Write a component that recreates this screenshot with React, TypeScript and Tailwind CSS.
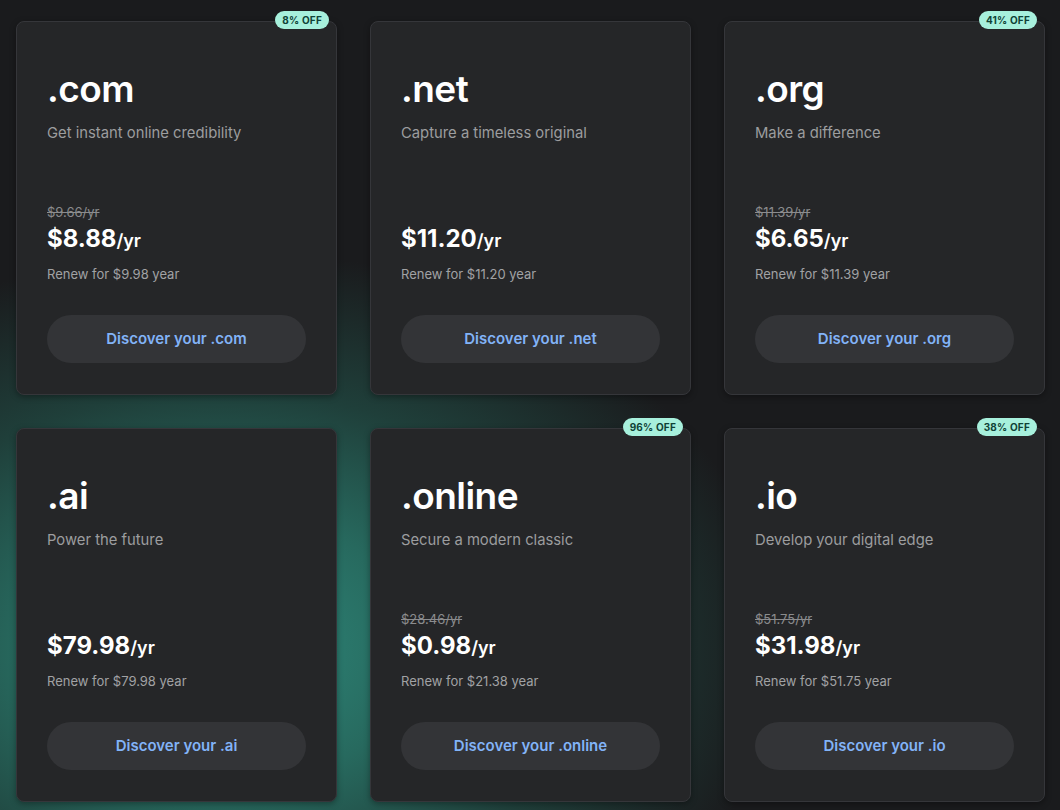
type Domain = {
  tld: string;
  tagline: string;
  was?: string;
  price: string;
  renew: string;
  off?: string;
};

const domains: Domain[] = [
  { tld: '.com', tagline: 'Get instant online credibility', was: '$9.66/yr', price: '$8.88', renew: 'Renew for $9.98 year', off: '8% OFF' },
  { tld: '.net', tagline: 'Capture a timeless original', price: '$11.20', renew: 'Renew for $11.20 year' },
  { tld: '.org', tagline: 'Make a difference', was: '$11.39/yr', price: '$6.65', renew: 'Renew for $11.39 year', off: '41% OFF' },
  { tld: '.ai', tagline: 'Power the future', price: '$79.98', renew: 'Renew for $79.98 year' },
  { tld: '.online', tagline: 'Secure a modern classic', was: '$28.46/yr', price: '$0.98', renew: 'Renew for $21.38 year', off: '96% OFF' },
  { tld: '.io', tagline: 'Develop your digital edge', was: '$51.75/yr', price: '$31.98', renew: 'Renew for $51.75 year', off: '38% OFF' },
];

function DomainCard({ d }: { d: Domain }) {
  return (
    <div className="relative flex h-[374px] flex-col rounded-lg border border-[#35363a] bg-[#252628] px-[30px] pb-[31px] pt-[48px] shadow-[0_2px_6px_rgba(0,0,0,0.35)]">
      {d.off ? (
        <span className="absolute -top-[11px] right-[7px] rounded-full bg-[#a7f0dc] px-[7px] text-[10px] font-bold leading-[18px] tracking-[0.02em] text-[#0f4236]">
          {d.off}
        </span>
      ) : null}
      <div className="text-[37px] font-semibold leading-[38px] tracking-[-0.015em] text-white">{d.tld}</div>
      <div className="mt-[15px] text-[14.8px] leading-[20px] text-[#9c9d9f]">{d.tagline}</div>
      <div className="flex-1" />
      <div className="h-[18px] text-[13px] leading-[18px] text-[#8b8c8e] line-through">{d.was ?? ''}</div>
      <div className="mt-[3px] leading-[30px] text-white">
        <span className="text-[24px] font-bold">{d.price}</span>
        <span className="text-[18px] font-semibold">/yr</span>
      </div>
      <div className="mt-[9px] text-[13px] leading-[18px] text-[#a1a2a4]">{d.renew}</div>
      <button className="mt-[32px] h-[48px] w-full rounded-full bg-[#333437] text-[15px] font-semibold text-[#82b3f7]">
        Discover your {d.tld}
      </button>
    </div>
  );
}

export default function App() {
  return (
    <div
      className="h-[810px] w-full overflow-hidden bg-[#1a1b1d] bg-[radial-gradient(ellipse_560px_400px_at_220px_650px,#2f8d7f_0%,#27695e_35%,#1f3f3a_65%,#1a1b1d_100%)] px-[16px] pt-[21px]"
      style={{ fontFamily: 'Inter, "Noto Sans", sans-serif' }}
    >
      <div className="grid grid-cols-[321px_321px_321px] gap-[33px]">
        {domains.map((d) => (
          <DomainCard key={d.tld} d={d} />
        ))}
      </div>
    </div>
  );
}
